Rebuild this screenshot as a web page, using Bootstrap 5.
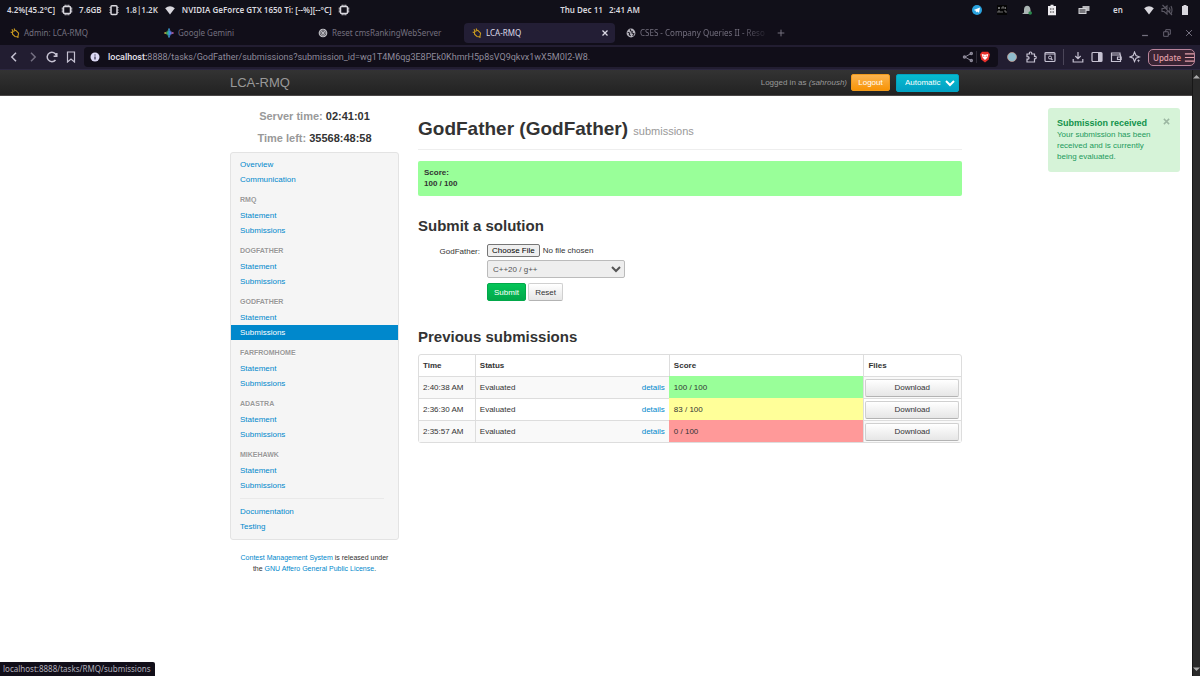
<!DOCTYPE html>
<html lang="en">
<head>
<meta charset="utf-8">
<meta name="viewport" content="width=device-width, initial-scale=1">
<title>LCA-RMQ</title>
<link href="https://cdn.jsdelivr.net/npm/bootstrap@5.3.0/dist/css/bootstrap.min.css" rel="stylesheet">
<style>
:root{--ui:"Noto Sans","Open Sans",sans-serif;--page:"Liberation Sans",Arial,sans-serif}
body{font:8px/11px var(--page);color:#333;background:#fff;min-height:100vh}
a{color:#0088cc;text-decoration:none}
svg{fill:none;stroke:currentColor;stroke-width:1.5;flex:none;display:block}
.ico{width:12px;height:12px}
button{font-family:inherit}
.plain{background:none;border:0;padding:0;color:inherit;display:flex;align-items:center;justify-content:center}

.desk{height:20px;background:#111019;color:#d9d8de;font:600 8px/20px var(--ui);padding-left:7px;padding-right:6px}
.desk .stats{gap:6px}
.cell{display:flex;justify-content:center}
.c25{width:25px}.c18{width:18px}.c44{width:44px}
.apart{margin-right:7px}
.clock{left:50%;top:0;transform:translateX(-50%)}

.tabs{height:25px;background:#110e19;color:#74707f;font:8px/20px var(--ui);padding:3px 2px 2px;gap:3px}
.tabs a{width:151px;color:inherit;padding-left:8px;padding-right:2px;gap:4px;border-radius:4px;white-space:nowrap}
.tabs a.on{background:#231e35;color:#dcdae6;padding-right:5px}
.tabs svg{width:10px;height:10px}
.fade-end{-webkit-mask-image:linear-gradient(90deg,#000 80%,#0003)}

.tools{height:25px;background:#221d31;border-bottom:1px solid #2c2740;color:#c6c2d2;padding:0 5px 0 4px}
.tools .go{width:19px}
.url{background:#110e19;height:20px;border-radius:4px;font:9px/20px Roboto,sans-serif;color:#8f8b9b;padding:0 7px 0 5px;margin-left:4px;gap:7px}
.url b{font-weight:500;color:#e4e2ec}
.url a{color:inherit}
.url .vr{margin:4px -5px}
.update{border:1px solid #b9849b;border-radius:5px;background:#3a2434;color:#e5a0ab;font:500 8px/15px var(--ui);padding:0 4px;gap:3px;width:47px;height:17px}

.site-nav{height:26px;background:linear-gradient(#333,#222);border-bottom:1px solid #4a4747;color:#999}
.wrap{max-width:732px;width:100%;margin:0 auto}
.brandname{font-size:13px;color:#999}
.logout{background:linear-gradient(#fbb450,#f89406);border:1px solid #f09a1c;border-radius:2px;color:#fff;width:39px;height:17px;padding:0;font-size:8px}
.lang{background:linear-gradient(#06bccf,#02a0c4);border:1px solid #02a3c0;border-radius:2px;color:#fff;font-size:8px;width:63px;height:18px;padding:0 0 0 4px;margin:0 3px 0 6px}
.rail{width:8px;background:#2a2a2a;border-left:1px solid #171717;color:#aaa}
.rail svg{width:7px;height:5px;fill:currentColor;stroke:none}

.side{width:169px;margin-right:19px;padding-top:9px}
.times{font:bold 11px/22px var(--page);color:#999;text-align:center;margin-bottom:3px}
.times b{color:#333}
.menu{background:#f5f5f5;border:1px solid #e3e3e3;border-radius:3px;padding:4px 0 5px}
.menu a{display:block;line-height:15px;padding:0 9px}
.menu a.on{background:#08c;color:#fff}
.menu h3{font:bold 7px/11px var(--page);color:#999;margin:0;padding:7px 9px 3px;text-shadow:0 1px 0 #fff}
.menu hr{margin:5px 14px 5px 9px;border-color:#c8c8c8}
.foot{font-size:7px;text-align:center;margin-top:12px}

.main{padding-top:20px}
h1{font:bold 19px/25px var(--page);margin:0;padding-bottom:5px;border-bottom:1px solid #eee}
h1 small{font-size:11px;color:#999;font-weight:400}
h2{font:bold 15px/25px var(--page);margin:0}
.scorebox{background:#9f9;border-radius:2px;padding:6px 6px 7px;margin:11px 0 17px;font-weight:bold}
.solve{margin:6px 0 23px}
.solve .lab{width:62px;text-align:right;margin-right:7px;padding-top:2px}
.solve input[type=file]{font-size:8px;line-height:11px;height:13px;width:138px;display:block}
.solve input::file-selector-button{font:8px/9px var(--page);height:13px;padding:0 4px;margin-right:3px;border:1px solid #767676;border-radius:2px;background:#efefef;color:#000}
.solve select{display:block;width:138px;height:18px;margin:3px 0 5px;padding:0 1px;font-size:8px;background:#eee;color:#555;border:1px solid #bbb;border-radius:2px}
.act{height:18px;border:1px solid #d0d0d0;border-bottom-color:#b3b3b3;border-radius:2px;background:linear-gradient(#fff,#e6e6e6);color:#333;font-size:8px;line-height:11px;padding:0 6px}
.act.go-green{background:linear-gradient(#04c558,#02a84a);border-color:#02a84a;color:#fff}
.subs{width:100%;margin-top:5px;border:1px solid #ddd;border-collapse:separate;border-spacing:0;border-radius:3px;table-layout:fixed}
.subs th,.subs td{height:22px;padding:0 4px;border-top:1px solid #ddd;border-left:1px solid #ddd;vertical-align:middle}
.subs th{border-top:0;height:21px}
.subs th:first-child,.subs td:first-child{border-left:0}
.subs tbody tr:nth-child(odd) td{background:#f9f9f9}
.subs tbody tr td.full{background:#9f9;border-color:#9f9}
.subs tbody tr td.part{background:#ff9;border-color:#ff9}
.subs tbody tr td.none{background:#f99;border-color:#f99}
.subs td:last-child{padding:0 2px 0 1px}
.subs .act{width:100%;display:block}

.note{top:12px;right:12px;width:132px;background:#d6f3d8;color:#229a5c;border-radius:3px;padding:9px 20px 10px 9px}
.note h4{font:bold 9px/12px var(--page);margin:0;color:#12924c;white-space:nowrap}
.note .plain{color:#9cb7a2;top:10px;right:10px}
.hint{left:0;bottom:0;background:#110e19;color:#b2aebb;font:8px/14px var(--ui);padding:0 4px 0 3px;border-top-right-radius:2px}
</style>
</head>
<body class="d-flex flex-column">
<svg class="d-none">
  <symbol id="chip" viewBox="0 0 12 12"><rect x="2.5" y="2.5" width="7" height="7" rx="1"/><path d="M4.200 .7v1.500M6 .7v1.500M7.800 .7v1.500M4.200 9.800v1.500M6 9.800v1.500M7.800 9.800v1.500M.7 4.200h1.500M.7 6h1.500M.7 7.800h1.500M9.800 4.200h1.500M9.800 6h1.500M9.800 7.800h1.500" stroke-width="1"/></symbol>
  <symbol id="ram" viewBox="0 0 12 12"><rect x="3" y="1.7" width="6" height="8.8" rx="1"/><path d="M1.500 3.500h1M1.500 6h1M1.500 8.500h1M9.500 3.500h1M9.500 6h1M9.500 8.500h1" stroke-width="1"/></symbol>
  <symbol id="wifi" viewBox="0 0 12 12"><path d="M1.200 4.200Q6 .2 10.800 4.200L6 10.500Z" fill="currentColor" stroke="none"/></symbol>
  <symbol id="cms" viewBox="0 0 12 12"><g stroke="#c99a20" stroke-width="1.3"><path d="M3.200 4.200 7 2.800 10.300 6.300 9.400 10.600 6 10.200 3 7.400Z"/><path d="M3.500 4.100 2.400 1.400M5.800 3 5 .6M3 5.800.8 4.800M9 10.500l1 1"/></g></symbol>
</svg>

<header>
  <div class="desk position-relative d-flex align-items-center justify-content-between">
    <div class="stats d-flex align-items-center">
      <span>4.2%[45.2°C]</span><svg class="ico"><use href="#chip"/></svg>
      <span>7.6GB</span><svg class="ico"><use href="#ram"/></svg>
      <span>1.8|1.2K</span><svg class="ico"><use href="#wifi"/></svg>
      <span>NVIDIA GeForce GTX 1650 Ti: [--%][--°C]</span><svg class="ico"><use href="#chip"/></svg>
    </div>
    <div class="clock position-absolute">Thu Dec 11 &nbsp; 2:41 AM</div>
    <div class="d-flex align-items-center">
      <span class="cell c25"><svg class="ico" viewBox="0 0 12 12"><circle cx="6" cy="6" r="5" fill="#2aa3de" stroke="none"/><path d="M2.700 6 9 3.400 8 8.700 6 7.400 5 8.400 4.800 6.800Z" fill="#fff" stroke="none"/></svg></span>
      <span class="cell c25"><svg class="ico" viewBox="0 0 12 12"><rect x="1" y="1" width="10" height="10" fill="#050505" stroke="none"/><path d="M2 3l2 2M4 3 2 5M6 5V3h2v2M9.500 3v2M2 9V7h2v2M6 7v2M8 7h2v2" stroke="#888" stroke-width=".8"/></svg></span>
      <span class="cell c25"><svg class="ico" viewBox="0 0 12 12"><path d="M1 10 3 8.500V5.500Q3.300 1.800 6.200 1.800T9.500 6V9l-1 1Z" fill="#aab5b3" stroke="none"/><circle cx="9.200" cy="9" r="1.800" fill="#2a8a4c" stroke="none"/></svg></span>
      <span class="cell c25 apart"><svg class="ico" viewBox="0 0 12 12"><path d="M2 2h2.500V.8h3V2H10v9.300H2Z" fill="#ecebee" stroke="none"/><path d="M4 5h1.500M4 8h1.500M6.500 5H8M6.500 8H8" stroke="#333" stroke-width="1"/></svg></span>
      <span class="cell c25"><svg class="ico" viewBox="0 0 12 12"><rect x="4.500" y="2" width="7" height="5" fill="#b8b8bc" stroke="none"/><rect x="1" y="4.500" width="7" height="5" fill="#77777c" stroke="#d2d2d6" stroke-width="1"/></svg></span>
      <span class="cell c44">en</span>
      <span class="cell c18"><svg class="ico"><use href="#wifi"/></svg></span>
      <span class="cell c18"><svg class="ico" viewBox="0 0 12 12" color="#5a5863"><path d="M1 4.500h2L6 2v8L3 7.500H1ZM1.500 1 11 11M8 3.500q2 2.500 0 5M10 2q2 4 0 8" stroke-width="1.100"/></svg></span>
      <span class="cell c18"><svg class="ico" viewBox="0 0 12 12"><path d="M3 2h1.500V1h3v1H9v9H3Z" fill="#d9d8de" stroke="none"/></svg></span>
    </div>
  </div>

  <nav class="tabs d-flex align-items-center">
    <a href="#" class="d-flex align-items-center"><svg><use href="#cms"/></svg>Admin: LCA-RMQ</a>
    <a href="#" class="d-flex align-items-center"><svg viewBox="0 0 12 12"><defs><linearGradient id="gem"><stop offset="0" stop-color="#f6b73c"/><stop offset=".3" stop-color="#30b56b"/><stop offset=".6" stop-color="#3c83f6"/><stop offset="1" stop-color="#d9569b"/></linearGradient></defs><path d="M6 .5Q6.500 5.500 11.500 6 6.500 6.500 6 11.500 5.500 6.500.5 6 5.500 5.500 6 .5Z" fill="url(#gem)" stroke="url(#gem)" stroke-width="1"/></svg>Google Gemini</a>
    <a href="#" class="d-flex align-items-center"><svg viewBox="0 0 12 12"><circle cx="6" cy="6" r="5.200" fill="#c9c8ce" stroke="none"/><path d="M6 2.200 9.300 4.100V7.900L6 9.800 2.700 7.900V4.100ZM6 4 7.700 5V7L6 8 4.300 7V5ZM6 2.200V4M9.300 7.900 7.700 7M2.700 7.900 4.300 7" stroke="#33313b" stroke-width=".7"/></svg>Reset cmsRankingWebServer</a>
    <a href="#" class="on d-flex align-items-center"><svg><use href="#cms"/></svg>LCA-RMQ<svg class="ms-auto" viewBox="0 0 12 12"><path d="m3 3 6 6M9 3 3 9"/></svg></a>
    <a href="#" class="d-flex align-items-center"><svg viewBox="0 0 12 12"><circle cx="6" cy="6" r="5.300" fill="#b6b4bd" stroke="none"/><path d="M2 5 4.500 6 4 8 5.500 9.500M5 1.500 5.500 3.500 7.500 4 7 6 9.500 7 8 9.500" stroke="#1a1722" stroke-width="1.300"/></svg><span class="fade-end">CSES - Company Queries II - Reso</span></a>
    <button class="plain ms-1" aria-label="New tab"><svg viewBox="0 0 12 12"><path d="M6 2v8M2 6h8" stroke-width="1.200"/></svg></button>
    <div class="ms-auto d-flex gap-2">
      <button class="plain me-1" aria-label="Minimise"><svg viewBox="0 0 12 12"><path d="M2.500 9h7"/></svg></button>
      <button class="plain me-1" aria-label="Restore"><svg viewBox="0 0 12 12"><path d="M4.500 4.500V2H10v5.500H7.500M2 4.500h5.500V10H2Z" stroke-width="1"/></svg></button>
      <button class="plain me-1" aria-label="Close"><svg viewBox="0 0 12 12"><path d="m2.500 2.500 7 7M9.500 2.500l-7 7" stroke-width="1.200"/></svg></button>
    </div>
  </nav>

  <div class="tools d-flex align-items-center">
    <button class="plain go" aria-label="Back"><svg class="ico" viewBox="0 0 12 12"><path d="M8 1.800 3.800 6 8 10.200"/></svg></button>
    <button class="plain go opacity-50" aria-label="Forward"><svg class="ico" viewBox="0 0 12 12"><path d="M4 1.800 8.200 6 4 10.200"/></svg></button>
    <button class="plain go" aria-label="Reload"><svg class="ico" viewBox="0 0 12 12"><path d="M9.500 9A4.700 4.700 0 1 1 10.400 4.500M10.800 2v3.200H7.600"/></svg></button>
    <button class="plain go" aria-label="Bookmark"><svg class="ico" viewBox="0 0 12 12"><path d="M2.500 1h7v10L6 8 2.500 11Z" stroke-width="1.200"/></svg></button>
    <div class="url d-flex align-items-center flex-grow-1">
      <svg class="ico" viewBox="0 0 12 12"><circle cx="6" cy="6" r="4.500" fill="#dcd9f4" stroke="none"/><path d="M6 5.500v3M6 3.400v1" stroke="#2a2540" stroke-width="1.200"/></svg>
      <a href="#" class="flex-grow-1"><b>localhost:</b>8888/tasks/GodFather/submissions?submission_id=wg1T4M6qg3E8PEk0KhmrH5p8sVQ9qkvx1wX5M0I2-W8.</a>
      <svg class="ico" viewBox="0 0 12 12"><path d="M9 2.500 3 6 9 9.500" stroke-width="1"/><circle cx="9.300" cy="2.500" r="1"/><circle cx="2.500" cy="6" r="1"/><circle cx="9.300" cy="9.500" r="1"/></svg>
      <span class="vr"></span>
      <svg class="ico" viewBox="0 0 12 12"><path d="M3 .8h6l2 2.400L9.700 8.500 6 11.500 2.300 8.500 1 3.200Z" fill="#e8302c" stroke="none"/><path d="M2.700 3 6 3.800 9.300 3 8.300 6.800 6 9 3.700 6.800Z" fill="#fff" stroke="none"/><path d="M4 5l1.300.5M8 5l-1.300.5" stroke="#e8302c" stroke-width=".8"/></svg>
    </div>
    <button class="plain go ms-1" aria-label="Extension"><svg class="ico" viewBox="0 0 12 12"><circle cx="6" cy="6" r="4.500" fill="#8fbccd" stroke="#cc9f91" stroke-width=".7"/></svg></button>
    <button class="plain go" aria-label="Extensions"><svg class="ico" viewBox="0 0 12 12"><path d="M2 3h2.500Q4 1 5.500 1T6.700 3H9.500v2.500Q11.200 5 11.200 6.500T9.500 7.800V11H2V8.200Q4 8.300 4 6.900T2 5.600Z" stroke-width="1.200"/></svg></button>
    <button class="plain go" aria-label="Search tabs"><svg class="ico" viewBox="0 0 12 12"><rect x="1" y="1.500" width="10" height="9" rx="1" stroke-width="1.200"/><path d="M1 3h10M7 7.500 8.500 9" stroke-width="1.200"/><circle cx="6" cy="6.500" r="1.500" stroke-width="1"/></svg></button>
    <span class="vr my-1 mx-1 opacity-25"></span>
    <button class="plain go" aria-label="Downloads"><svg class="ico" viewBox="0 0 12 12"><path d="M6 1v6.500M3.300 5 6 7.600 8.700 5M1.200 8v3h9.600V8" stroke-width="1.200"/></svg></button>
    <button class="plain go" aria-label="Sidebar"><svg class="ico" viewBox="0 0 12 12"><rect x="1" y="1.500" width="10" height="9" rx="1" stroke-width="1.200"/><path d="M7 2h4v8H7Z" fill="currentColor" stroke="none"/></svg></button>
    <button class="plain go" aria-label="Wallet"><svg class="ico" viewBox="0 0 12 12"><path d="M10 4V2H1.500v8.500H10.500V4H2M11.200 6H7.500v2.500h3.700Z" stroke-width="1.200"/></svg></button>
    <button class="plain go me-1" aria-label="Assistant"><svg class="ico" viewBox="0 0 12 12"><path d="M5.500 1 7 4.500 10.500 6 7 7.200 5.500 10.500 4.200 7.200 1 6 4.200 4.500Z" stroke-width="1.100"/><path d="m9.500 8 .5 1.200 1.200.5L10 10.200 9.500 11.400 9 10.200 7.800 9.700 9 9.200Z" fill="currentColor" stroke="none"/></svg></button>
    <button class="update d-flex align-items-center">Update<svg width="11" height="11" viewBox="0 0 12 12"><path d="M1 2h10M1 6h10M1 10h10" stroke-width="1.300"/></svg></button>
  </div>
</header>

<div class="d-flex flex-grow-1">
  <div class="flex-grow-1 d-flex flex-column">
    <nav class="site-nav d-flex">
      <div class="wrap d-flex align-items-center">
        <a class="brandname me-auto" href="#">LCA-RMQ</a>
        <span class="me-1">Logged in as <em>(sahroush)</em></span>
        <button class="logout">Logout</button>
        <select class="lang" aria-label="Language"><option>Automatic</option></select>
      </div>
    </nav>
    <div class="position-relative flex-grow-1">
      <div class="wrap d-flex align-items-start">
        <aside class="side flex-shrink-0">
          <div class="times"><div>Server time: <b>02:41:01</b></div><div>Time left: <b>35568:48:58</b></div></div>
          <nav class="menu">
            <a href="#">Overview</a><a href="#">Communication</a>
            <h3>RMQ</h3><a href="#">Statement</a><a href="#">Submissions</a>
            <h3>DOGFATHER</h3><a href="#">Statement</a><a href="#">Submissions</a>
            <h3>GODFATHER</h3><a href="#">Statement</a><a href="#" class="on">Submissions</a>
            <h3>FARFROMHOME</h3><a href="#">Statement</a><a href="#">Submissions</a>
            <h3>ADASTRA</h3><a href="#">Statement</a><a href="#">Submissions</a>
            <h3>MIKEHAWK</h3><a href="#">Statement</a><a href="#">Submissions</a>
            <hr>
            <a href="#">Documentation</a><a href="#">Testing</a>
          </nav>
          <footer class="foot"><a href="#">Contest Management System</a> is released under<br>the <a href="#">GNU Affero General Public License</a>.</footer>
        </aside>
        <main class="main flex-grow-1">
          <h1>GodFather (GodFather) <small>submissions</small></h1>
          <div class="scorebox">Score:<br>100 / 100</div>
          <h2>Submit a solution</h2>
          <form class="solve d-flex align-items-start">
            <label class="lab" for="src">GodFather:</label>
            <div>
              <input type="file" id="src">
              <select aria-label="Programming language"><option>C++20 / g++</option></select>
              <button type="button" class="act go-green">Submit</button>
              <button type="reset" class="act">Reset</button>
            </div>
          </form>
          <h2>Previous submissions</h2>
          <table class="subs">
            <colgroup><col style="width:10.3%"><col style="width:35.8%"><col style="width:35.9%"><col></colgroup>
            <thead><tr><th>Time</th><th>Status</th><th>Score</th><th>Files</th></tr></thead>
            <tbody>
              <tr><td>2:40:38 AM</td><td>Evaluated <a href="#" class="float-end">details</a></td><td class="full">100 / 100</td><td><button class="act">Download</button></td></tr>
              <tr><td>2:36:30 AM</td><td>Evaluated <a href="#" class="float-end">details</a></td><td class="part">83 / 100</td><td><button class="act">Download</button></td></tr>
              <tr><td>2:35:57 AM</td><td>Evaluated <a href="#" class="float-end">details</a></td><td class="none">0 / 100</td><td><button class="act">Download</button></td></tr>
            </tbody>
          </table>
        </main>
      </div>
      <div class="note position-absolute" role="alert">
        <h4>Submission received</h4>
        Your submission has been received and is currently being evaluated.
        <button class="plain position-absolute" aria-label="Close"><svg width="7" height="7" viewBox="0 0 12 12"><path d="m1.500 1.500 9 9M10.500 1.500l-9 9" stroke-width="2.500"/></svg></button>
      </div>
      <div class="hint position-absolute">localhost:8888/tasks/RMQ/submissions</div>
    </div>
  </div>
  <div class="rail d-flex flex-column justify-content-between py-1">
    <svg viewBox="0 0 7 5"><path d="M0 4.500 3.500 1 7 4.500Z"/></svg>
    <svg viewBox="0 0 7 5"><path d="M0 .5 3.500 4 7 .5Z"/></svg>
  </div>
</div>
<script src="https://cdn.jsdelivr.net/npm/bootstrap@5.3.0/dist/js/bootstrap.bundle.min.js"></script>
</body>
</html>
